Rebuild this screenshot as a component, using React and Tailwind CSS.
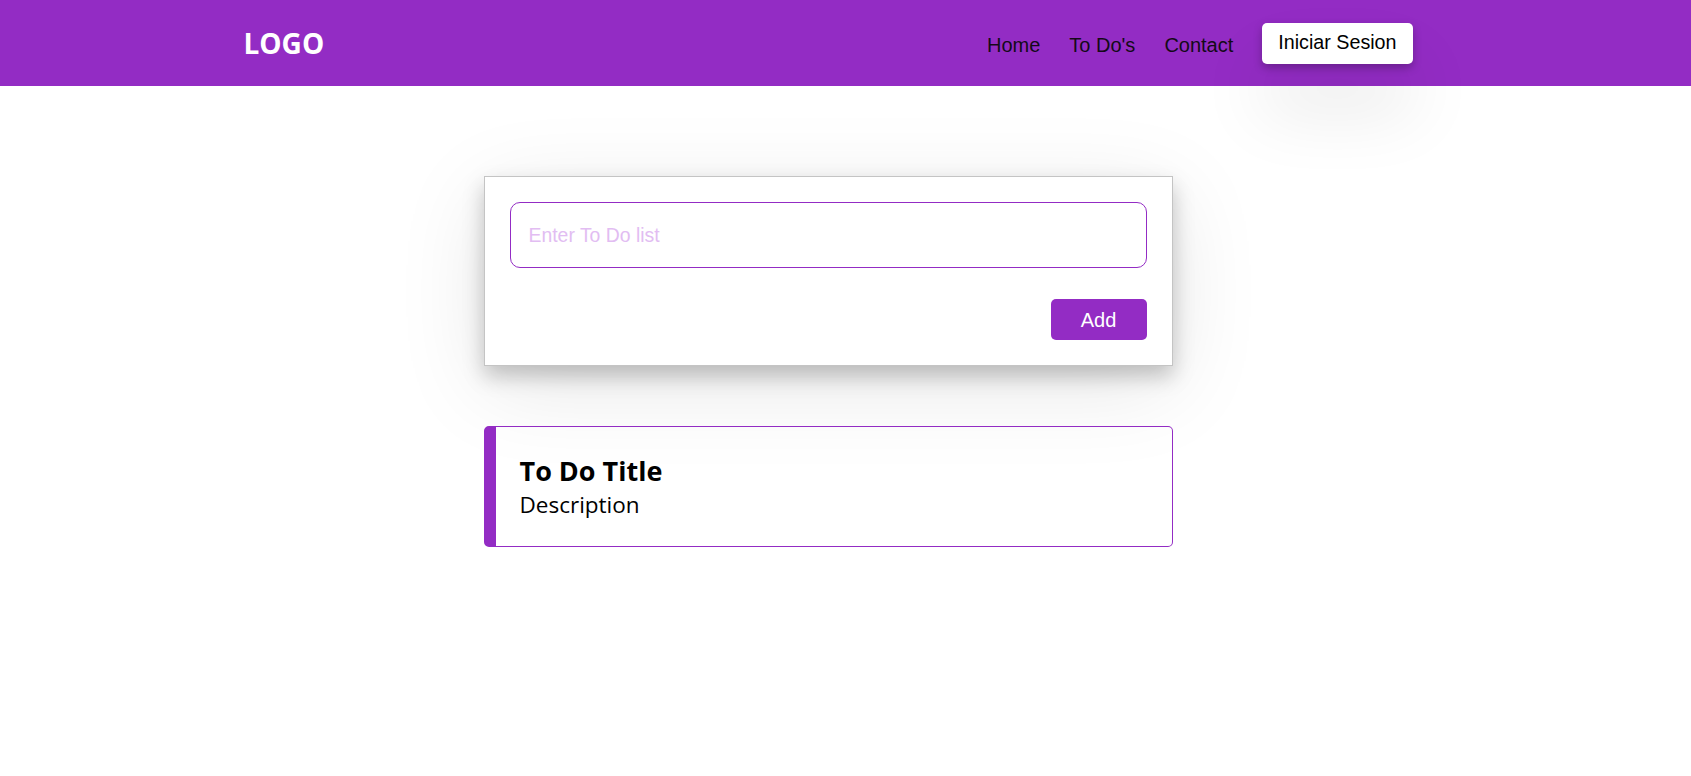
import React from "react";

const Header = () => {
  return (
    <header className="h-[86px] bg-[#932cc4] pr-[35px]">
      <div className="mx-auto flex h-full w-[1169px] items-center justify-between">
        <div className="font-['Open_Sans',sans-serif] text-[28px] font-bold text-white">
          LOGO
        </div>
        <nav className="flex items-center gap-[29px] font-['Liberation_Sans',Arial,sans-serif] text-[20px] text-[#140a18]">
          <a href="#" className="pt-[3px]">Home</a>
          <a href="#" className="pt-[3px]">To Do's</a>
          <a href="#" className="pt-[3px]">Contact</a>
          <button className="h-[41px] rounded-[5px] bg-white px-[16px] text-[19.7px] text-black shadow-[0_4px_8px_rgba(0,0,0,0.25),0_45px_70px_rgba(0,0,0,0.1)]">
            Iniciar Sesion
          </button>
        </nav>
      </div>
    </header>
  );
};

const TodoForm = () => {
  return (
    <div className="w-[689px] border border-[#c4c4c4] bg-white p-[25px] shadow-[0_10px_20px_rgba(0,0,0,0.22),0_20px_90px_rgba(0,0,0,0.1)]">
      <input
        type="text"
        placeholder="Enter To Do list"
        className="block h-[66px] w-full rounded-[10px] border border-[#932cc4] px-[18px] font-['Liberation_Sans',Arial,sans-serif] text-[19.4px] outline-none placeholder:text-[#e2bdf2]"
      />
      <div className="mt-[31px] flex justify-end">
        <button className="h-[41px] w-[96px] rounded-[5px] bg-[#932cc4] font-['Liberation_Sans',Arial,sans-serif] text-[20px] text-white">
          Add
        </button>
      </div>
    </div>
  );
};

const TodoItem = ({ title, description }) => {
  return (
    <div className="w-[689px] rounded-[5px] border border-l-[12px] border-[#932cc4] pb-[24px] pl-[24px] pt-[27px] font-['Open_Sans',sans-serif] text-black">
      <h2 className="text-[27px] font-bold leading-[34px]">{title}</h2>
      <p className="text-[22.5px] leading-[34px]">{description}</p>
    </div>
  );
};

export default function App() {
  return (
    <div className="min-h-screen bg-white">
      <Header />
      <main className="flex flex-col items-center gap-[60px] pr-[35px] pt-[90px]">
        <TodoForm />
        <TodoItem title="To Do Title" description="Description" />
      </main>
    </div>
  );
}
